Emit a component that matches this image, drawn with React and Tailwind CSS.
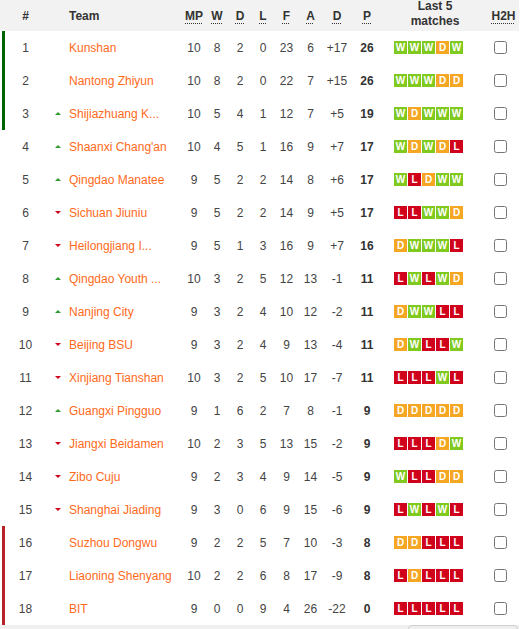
import React from "react";

const rows = [
  [1, "", "Kunshan", 10, 8, 2, 0, 23, 6, "+17", 26, "WWWDW", "g"],
  [2, "", "Nantong Zhiyun", 10, 8, 2, 0, 22, 7, "+15", 26, "WWWDD", "g"],
  [3, "up", "Shijiazhuang K...", 10, 5, 4, 1, 12, 7, "+5", 19, "WDWWW", "g"],
  [4, "up", "Shaanxi Chang'an", 10, 4, 5, 1, 16, 9, "+7", 17, "WDWDL", ""],
  [5, "up", "Qingdao Manatee", 9, 5, 2, 2, 14, 8, "+6", 17, "WLDWW", ""],
  [6, "down", "Sichuan Jiuniu", 9, 5, 2, 2, 14, 9, "+5", 17, "LLWWD", ""],
  [7, "down", "Heilongjiang I...", 9, 5, 1, 3, 16, 9, "+7", 16, "DWWWL", ""],
  [8, "up", "Qingdao Youth ...", 10, 3, 2, 5, 12, 13, "-1", 11, "LWLWD", ""],
  [9, "up", "Nanjing City", 9, 3, 2, 4, 10, 12, "-2", 11, "DWWLL", ""],
  [10, "down", "Beijing BSU", 9, 3, 2, 4, 9, 13, "-4", 11, "DWLLW", ""],
  [11, "down", "Xinjiang Tianshan", 10, 3, 2, 5, 10, 17, "-7", 11, "LLLWL", ""],
  [12, "up", "Guangxi Pingguo", 9, 1, 6, 2, 7, 8, "-1", 9, "DDDDD", ""],
  [13, "down", "Jiangxi Beidamen", 10, 2, 3, 5, 13, 15, "-2", 9, "LLLDW", ""],
  [14, "down", "Zibo Cuju", 9, 2, 3, 4, 9, 14, "-5", 9, "WLLDD", ""],
  [15, "down", "Shanghai Jiading", 9, 3, 0, 6, 9, 15, "-6", 9, "LWLWL", ""],
  [16, "", "Suzhou Dongwu", 9, 2, 2, 5, 7, 10, "-3", 8, "DDLLL", "r"],
  [17, "", "Liaoning Shenyang", 10, 2, 2, 6, 8, 17, "-9", 8, "LDLLL", "r"],
  [18, "", "BIT", 9, 0, 0, 9, 4, 26, "-22", 0, "LLLLL", "r"],
];

const boxCls = {
  W: "bg-[#80c91f]",
  D: "bg-[#f5a623]",
  L: "bg-[#d0021b]",
};

function Arrow({ dir }) {
  if (dir === "up")
    return <span className="block w-0 h-0 border-l-[3px] border-r-[3px] border-b-[3px] border-l-transparent border-r-transparent border-b-[#2f9a2f]" />;
  if (dir === "down")
    return <span className="block w-0 h-0 border-l-[3px] border-r-[3px] border-t-[3px] border-l-transparent border-r-transparent border-t-[#d0021b]" />;
  return null;
}

const hdr = "underline decoration-dotted underline-offset-[3px] decoration-1";

export default function App() {
  return (
    <div className="w-[519px] bg-white text-[12px] text-[#444] font-['Liberation_Sans',Arial,sans-serif]">
      <div className="flex h-[31px] items-center bg-[#f2f2f2] font-bold text-[#333]">
        <div className="w-[5px]" />
        <div className="w-[41px] text-center">#</div>
        <div className="w-[23px]" />
        <div className="w-[113px]">Team</div>
        <div className="w-[24px] text-center"><span className={hdr}>MP</span></div>
        <div className="w-[22px] text-center"><span className={hdr}>W</span></div>
        <div className="w-[24px] text-center"><span className={hdr}>D</span></div>
        <div className="w-[22px] text-center"><span className={hdr}>L</span></div>
        <div className="w-[25px] text-center"><span className={hdr}>F</span></div>
        <div className="w-[23px] text-center"><span className={hdr}>A</span></div>
        <div className="w-[30px] text-center"><span className={hdr}>D</span></div>
        <div className="w-[30px] text-center"><span className={hdr}>P</span></div>
        <div className="w-[106px] text-center leading-[15px] pb-[4px]">Last 5<br />matches</div>
        <div className="w-[31px] text-center"><span className={hdr}>H2H</span></div>
      </div>
      {rows.map((r) => {
        const [pos, dir, team, mp, w, d, l, f, a, gd, p, form, zone] = r;
        return (
          <div key={pos} className="flex h-[33px] items-center">
            <div className="w-[2px]" />
            <div className={`w-[3px] h-[33px] ${zone === "g" ? "bg-[#006400]" : zone === "r" ? "bg-[#b8202a]" : ""}`} />
            <div className="w-[41px] text-center">{pos}</div>
            <div className="w-[23px] flex justify-center"><Arrow dir={dir} /></div>
            <div className="w-[113px] text-[#ff6a1a] whitespace-nowrap">{team}</div>
            <div className="w-[24px] text-center">{mp}</div>
            <div className="w-[22px] text-center">{w}</div>
            <div className="w-[24px] text-center">{d}</div>
            <div className="w-[22px] text-center">{l}</div>
            <div className="w-[25px] text-center">{f}</div>
            <div className="w-[23px] text-center">{a}</div>
            <div className="w-[30px] text-center">{gd}</div>
            <div className="w-[30px] text-center font-bold text-[#333]">{p}</div>
            <div className="w-[100px] pl-[12px] flex gap-[1px]">
              {form.split("").map((c, i) => (
                <span key={i} className={`w-[13px] h-[13px] flex items-center justify-center text-white font-bold text-[10px] leading-none ${boxCls[c]}`}>{c}</span>
              ))}
            </div>
            <div className="w-[37px] flex justify-center">
              <input type="checkbox" readOnly className="w-[13px] h-[13px] m-0" />
            </div>
          </div>
        );
      })}
      <div className="flex h-[4px] bg-[#f0f0f0] overflow-hidden">
        <div className="ml-[408px] w-[110px] h-[10px] border border-[#cfcfcf] rounded-[4px] bg-[#efefef]" />
      </div>
    </div>
  );
}
